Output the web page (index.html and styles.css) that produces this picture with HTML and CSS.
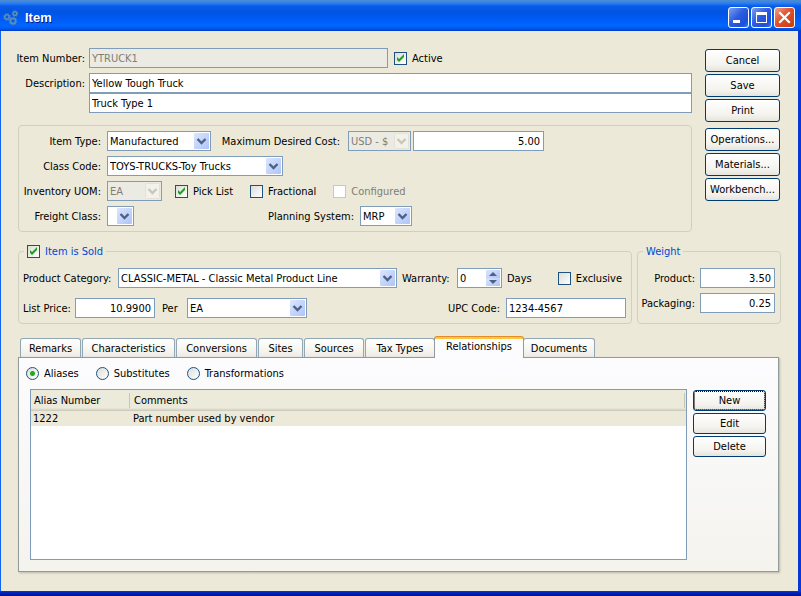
FILE: index.html
```html
<!DOCTYPE html>
<html lang="en">
<head>
    <meta charset="UTF-8">
    <meta name="viewport" content="width=device-width, initial-scale=1.0">
    <title>Item</title>
    <link rel="stylesheet" href="styles.css">
</head>
<body>
    <header class="titlebar">
        <svg class="logo" width="16" height="16" viewBox="0 0 16 16" fill="none" stroke="#5c8fb4">
            <circle cx="4" cy="7" r="2.2" stroke-width="1.6"/>
            <circle cx="4" cy="7" r="3.3" stroke-dasharray="1.2 1.4"/>
            <circle cx="12" cy="3.5" r="1.8" stroke-width="1.5"/>
            <circle cx="12" cy="3.5" r="2.8" stroke-dasharray="1.1 1.1"/>
            <circle cx="10" cy="11" r="2.6" stroke-width="1.7"/>
            <circle cx="10" cy="11" r="3.8" stroke-dasharray="1.4 1.5"/>
        </svg>
        <h1>Item</h1>
        <button class="win-btn" aria-label="Minimize">
            <svg width="19" height="19" viewBox="0 0 19 19"><path d="M4 12h7v3H4z" fill="#fff"/></svg>
        </button>
        <button class="win-btn" aria-label="Maximize">
            <svg width="19" height="19" viewBox="0 0 19 19"><path d="M4 4h11v11H4zM5 7v7h9V7z" fill="#fff" fill-rule="evenodd"/></svg>
        </button>
        <button class="win-btn close" aria-label="Close">
            <svg width="19" height="19" viewBox="0 0 19 19"><path d="M5 5l9 9M14 5l-9 9" stroke="#fff" stroke-width="2.2" stroke-linecap="square"/></svg>
        </button>
    </header>

    <main>
        <div class="top">
            <div class="fields">
                <div class="ident">
                    <label for="itemNumber">Item Number:</label>
                    <div class="line">
                        <input type="text" id="itemNumber" class="item-number" value="YTRUCK1" disabled>
                        <label class="check active"><input type="checkbox" checked>Active</label>
                    </div>
                    <label for="descrip1">Description:</label>
                    <div class="descrip">
                        <input type="text" id="descrip1" value="Yellow Tough Truck">
                        <input type="text" value="Truck Type 1" aria-label="Description line 2">
                    </div>
                </div>

                <div class="box">
                    <div class="line">
                        <label class="lead" for="itemType">Item Type:</label>
                        <select id="itemType" class="w-type"><option>Manufactured</option></select>
                        <label class="cost-label" for="maxCost">Maximum Desired Cost:</label>
                        <select class="w-currency" aria-label="Currency" disabled><option>USD - $</option></select>
                        <input type="text" id="maxCost" class="num w-cost" value="5.00">
                    </div>
                    <div class="line">
                        <label class="lead" for="classCode">Class Code:</label>
                        <select id="classCode" class="w-class"><option>TOYS-TRUCKS-Toy Trucks</option></select>
                    </div>
                    <div class="line">
                        <label class="lead" for="uom">Inventory UOM:</label>
                        <select id="uom" class="w-uom" disabled><option>EA</option></select>
                        <div class="checks">
                            <label class="check"><input type="checkbox" checked>Pick List</label>
                            <label class="check"><input type="checkbox">Fractional</label>
                            <label class="check off"><input type="checkbox" disabled>Configured</label>
                        </div>
                    </div>
                    <div class="line">
                        <label class="lead" for="freight">Freight Class:</label>
                        <select id="freight" class="w-freight"><option></option></select>
                        <label class="planning-label" for="planning">Planning System:</label>
                        <select id="planning" class="w-planning"><option>MRP</option></select>
                    </div>
                </div>
            </div>

            <div class="actions">
                <button>Cancel</button>
                <button>Save</button>
                <button>Print</button>
                <button class="split">Operations...</button>
                <button>Materials...</button>
                <button>Workbench...</button>
            </div>
        </div>

        <div class="groups">
            <fieldset class="sold">
                <legend><label class="check"><input type="checkbox" checked>Item is Sold</label></legend>
                <div class="line">
                    <label class="category-label" for="category">Product Category:</label>
                    <select id="category" class="w-category"><option>CLASSIC-METAL - Classic Metal Product Line</option></select>
                    <label class="warranty-label" for="warranty">Warranty:</label>
                    <input type="number" id="warranty" class="w-spin" value="0">
                    <span class="days">Days</span>
                    <label class="check exclusive"><input type="checkbox">Exclusive</label>
                </div>
                <div class="line">
                    <label class="price-label" for="price">List Price:</label>
                    <input type="text" id="price" class="num w-price" value="10.9900">
                    <label class="per-label" for="per">Per</label>
                    <select id="per" class="w-upc"><option>EA</option></select>
                    <label class="upc-label" for="upc">UPC Code:</label>
                    <input type="text" id="upc" class="w-upc" value="1234-4567">
                </div>
            </fieldset>
            <fieldset class="weight">
                <legend>Weight</legend>
                <div class="line">
                    <label for="wtProduct">Product:</label>
                    <input type="text" id="wtProduct" class="num w-weight" value="3.50">
                </div>
                <div class="line">
                    <label for="wtPackaging">Packaging:</label>
                    <input type="text" id="wtPackaging" class="num w-weight" value="0.25">
                </div>
            </fieldset>
        </div>

        <div class="tabs" role="tablist">
            <button role="tab" class="t-remarks">Remarks</button>
            <button role="tab" class="t-char">Characteristics</button>
            <button role="tab" class="t-conv">Conversions</button>
            <button role="tab" class="t-sites">Sites</button>
            <button role="tab" class="t-sources">Sources</button>
            <button role="tab" class="t-tax">Tax Types</button>
            <button role="tab" class="t-rel selected" aria-selected="true">Relationships</button>
            <button role="tab" class="t-docs">Documents</button>
        </div>
        <section class="panel" role="tabpanel">
            <div class="radios">
                <label class="check"><input type="radio" name="relation" checked>Aliases</label>
                <label class="check"><input type="radio" name="relation">Substitutes</label>
                <label class="check"><input type="radio" name="relation">Transformations</label>
            </div>
            <div class="list-area">
                <div class="list">
                    <table>
                        <thead>
                            <tr><th class="alias">Alias Number</th><th>Comments</th></tr>
                        </thead>
                        <tbody>
                            <tr><td>1222</td><td>Part number used by vendor</td></tr>
                        </tbody>
                    </table>
                </div>
                <div class="list-actions">
                    <button class="focused">New</button>
                    <button>Edit</button>
                    <button>Delete</button>
                </div>
            </div>
        </section>
    </main>
</body>
</html>
```
FILE: styles.css
```css
* {
    box-sizing: border-box;
}
body {
    margin: 0;
    min-height: 100vh;
    display: flex;
    flex-direction: column;
    background: linear-gradient(#0838d8, #0020b8 40%, #001090) bottom / 100% 5px no-repeat, linear-gradient(90deg, #1464f0 1px, #0a36d8 1px);
    color: #000;
    font: 11px/13px Tahoma, "DejaVu Sans Condensed", sans-serif;
}
input, select, button {
    font: inherit;
    color: inherit;
    margin: 0;
}

/* title bar */
.titlebar {
    height: 31px;
    display: flex;
    align-items: center;
    gap: 2px;
    padding: 4px 6px 0 3px;
    background: linear-gradient(#4a8ad0 0, #4a8ad0 1px, #2a80f8 3px, #0a5ce8 6px, #0054e3 12px, #005cf8 20px, #0066ff 26px, #0054e8 29px, #003cc8 31px);
}
.titlebar h1 {
    flex: 1;
    margin: 0 0 0 4px;
    color: #fff;
    font: bold 13px/16px "Liberation Sans", sans-serif;
    text-shadow: 1px 1px 0 #0a1883;
}
.win-btn {
    width: 21px;
    height: 21px;
    padding: 0;
    border: 1px solid #fff;
    border-radius: 3px;
    background: linear-gradient(135deg, #7c9ff0, #2c5ce0 45%, #1c50d8 80%, #3c78f0);
}
.win-btn.close {
    background: linear-gradient(135deg, #f0a088, #e0502c 45%, #c83c10);
}
.win-btn svg {
    display: block;
}

main {
    flex: 1;
    display: flex;
    flex-direction: column;
    margin: 0 3px 5px 1px;
    padding: 17px 17px 19px 17px;
    background: #ece9d8;
}
.line {
    display: flex;
    align-items: center;
}

/* controls */
input[type=text], input[type=number], select {
    height: 20px;
    padding: 0 2px;
    border: 1px solid #7f9db9;
    border-radius: 0;
    background-color: #fff;
    appearance: none;
}
input:disabled, select:disabled {
    background-color: #ebebe4;
    color: #7f7e75;
    opacity: 1;
}
input.num {
    padding-right: 3px;
    text-align: right;
}
select {
    padding: 0 17px 0 2px;
    background: #fff url("data:image/svg+xml,%3Csvg xmlns='http://www.w3.org/2000/svg' width='15' height='16'%3E%3ClinearGradient id='g' x2='1' y2='1'%3E%3Cstop stop-color='%23dbe6fe'/%3E%3Cstop offset='1' stop-color='%23aec4f8'/%3E%3C/linearGradient%3E%3Crect width='15' height='16' rx='1' fill='url(%23g)'/%3E%3Cpath d='M3.5 6l4 4 4-4' fill='none' stroke='%234d6185' stroke-width='2.4'/%3E%3C/svg%3E") right 1px center no-repeat;
}
select:disabled {
    background-image: url("data:image/svg+xml,%3Csvg xmlns='http://www.w3.org/2000/svg' width='15' height='16'%3E%3Crect x='.5' y='.5' width='14' height='15' rx='1' fill='%23f3f2ea' stroke='%23e4e2d6'/%3E%3Cpath d='M3.5 6l4 4 4-4' fill='none' stroke='%23c9c7ba' stroke-width='2.4'/%3E%3C/svg%3E");
}
input[type=number] {
    appearance: textfield;
    background: #fff url("data:image/svg+xml,%3Csvg xmlns='http://www.w3.org/2000/svg' width='14' height='16'%3E%3ClinearGradient id='g' x2='1' y2='1'%3E%3Cstop stop-color='%23dbe6fe'/%3E%3Cstop offset='1' stop-color='%23aec4f8'/%3E%3C/linearGradient%3E%3Crect width='14' height='8' fill='url(%23g)'/%3E%3Crect y='8' width='14' height='8' fill='url(%23g)'/%3E%3Cpath d='M3 6l4-4 4 4zM3 10l4 4 4-4z' fill='%234d6185'/%3E%3C/svg%3E") right 1px center no-repeat;
}
input::-webkit-inner-spin-button {
    appearance: none;
}
.check {
    display: flex;
    align-items: center;
    gap: 5px;
}
.check input {
    appearance: none;
    width: 13px;
    height: 13px;
    border: 1px solid #1c5180;
    background: linear-gradient(135deg, #dcdcd7, #fff);
}
.check input[type=checkbox]:checked {
    background: url("data:image/svg+xml,%3Csvg xmlns='http://www.w3.org/2000/svg' width='11' height='11'%3E%3Cpath d='M2 4v3l2 2 5-5V1L4 6z' fill='%2321a121'/%3E%3C/svg%3E"), linear-gradient(135deg, #dcdcd7, #fff);
}
.check input:disabled {
    border-color: #cac8bb;
    background: #fff;
}
.check input[type=radio] {
    border-radius: 50%;
}
.check input[type=radio]:checked {
    background: radial-gradient(circle, #22a822 0, #22a822 2px, transparent 3px), linear-gradient(135deg, #dcdcd7, #fff);
}
.off {
    color: #7f7e75;
}

/* top section */
.top {
    display: flex;
    gap: 13px;
    margin-right: 1px;
}
.fields {
    flex: 1;
}
.ident {
    display: grid;
    grid-template-columns: 67px 1fr;
    gap: 5px 4px;
}
.ident > label {
    justify-self: end;
    padding-top: 4px;
    white-space: nowrap;
}
.item-number {
    width: 299px;
}
.active {
    margin-left: 6px;
}
.descrip {
    display: flex;
    flex-direction: column;
}
.box {
    display: flex;
    flex-direction: column;
    gap: 5px;
    margin-top: 12px;
    padding: 5px 4px;
    border: 1px solid #d0d0bf;
    border-radius: 4px;
}
.lead {
    width: 78px;
    margin-right: 6px;
    text-align: right;
    white-space: nowrap;
}
.cost-label {
    width: 129px;
    margin-right: 8px;
    text-align: right;
}
.planning-label {
    width: 220px;
    margin-right: 6px;
    text-align: right;
}
.checks {
    display: flex;
    gap: 17px;
    margin-left: 13px;
}
.w-type { width: 104px; }
.w-currency { width: 63px; }
.w-cost { width: 131px; margin-left: 2px; }
.w-class { width: 176px; }
.w-uom { width: 55px; }
.w-freight { width: 27px; }
.w-planning { width: 52px; }
.w-category { width: 279px; }
.w-spin { width: 45px; }
.w-price { width: 80px; }
.w-upc { width: 120px; }
.w-weight { width: 75px; }

/* push buttons */
.actions, .list-actions {
    display: flex;
    flex-direction: column;
    gap: 2px;
}
.actions {
    width: 75px;
    padding-top: 1px;
}
.actions button, .list-actions button {
    height: 23px;
    padding: 0;
    border: 1px solid #003c74;
    border-radius: 3px;
    background: linear-gradient(#fff, #f4f3ee 70%, #e6e4dc);
}
.actions .split {
    margin-top: 4px;
}
.list-actions {
    width: 73px;
    padding-top: 1px;
}
.list-actions button {
    height: 21px;
}
.list-actions .focused {
    outline: 1px dotted #000;
    outline-offset: -2px;
}

/* group boxes */
.groups {
    display: flex;
    gap: 5px;
    margin-top: 13px;
}
fieldset {
    min-width: 0;
    margin: 0;
    padding: 10px 5px 5px 4px;
    border: 1px solid #d0d0bf;
    border-radius: 4px;
}
legend {
    height: 13px;
    margin-left: 1px;
    padding: 0 3px;
    color: #0046d5;
}
.sold {
    flex: 1;
}
.sold .line + .line {
    margin-top: 10px;
}
.category-label {
    width: 95px;
    white-space: nowrap;
}
.warranty-label {
    width: 60px;
    padding-left: 5px;
    white-space: nowrap;
}
.days {
    margin-left: 5px;
}
.exclusive {
    margin: 0 4px 0 auto;
}
.price-label {
    width: 52px;
    white-space: nowrap;
}
.per-label {
    width: 32px;
    padding-left: 7px;
}
.upc-label {
    margin: 0 6px 0 auto;
}
.weight {
    width: 144px;
}
.weight .line {
    justify-content: flex-end;
    gap: 5px;
}
.weight .line + .line {
    margin-top: 5px;
}

/* tabs */
.tabs {
    display: flex;
    align-items: flex-end;
    gap: 1px;
    height: 21px;
    margin-top: 12px;
    padding-left: 2px;
}
.tabs button {
    height: 19px;
    padding: 0;
    border: 1px solid #91a7b4;
    border-bottom: 0;
    border-radius: 3px 3px 0 0;
    background: linear-gradient(#fff, #f6f5f0 60%, #ecebe4);
}
.t-remarks { width: 61px; }
.t-char { width: 93px; }
.t-conv { width: 81px; }
.t-sites { width: 45px; }
.t-sources { width: 60px; }
.t-tax { width: 70px; }
.t-rel { width: 90px; }
.t-docs { width: 72px; }
.tabs .selected {
    height: 22px;
    margin: 0 -2px -1px -2px;
    padding-bottom: 2px;
    border-color: #e68b2c #919b9c #919b9c;
    background: linear-gradient(#ffc73c 2px, #fcfcfe 2px);
    position: relative;
}
.panel {
    flex: 1;
    display: flex;
    flex-direction: column;
    margin-right: 2px;
    padding: 9px 12px 11px 11px;
    border: 1px solid #919b9c;
    background: linear-gradient(#fcfcfe, #f4f3ee);
    box-shadow: 1px 1px 2px #b8b6a6;
}
.radios {
    display: flex;
    gap: 17px;
    margin: 0 0 9px -4px;
}
.list-area {
    flex: 1;
    display: flex;
    gap: 6px;
}
.list {
    flex: 1;
    border: 1px solid #7f9db9;
    background: #fff;
}
table {
    width: 100%;
    border-collapse: collapse;
    table-layout: fixed;
}
th {
    height: 21px;
    padding: 0 3px;
    font-weight: normal;
    text-align: left;
    background: linear-gradient(#c7c5b2, #c7c5b2) right 1px center / 1px 15px no-repeat, linear-gradient(#ebeadb 18px, #d6d2c2 20px, #cbc7b8);
}
td {
    height: 15px;
    padding: 0 2px;
    background: #ece9d8;
}
.alias {
    width: 100px;
}
```
